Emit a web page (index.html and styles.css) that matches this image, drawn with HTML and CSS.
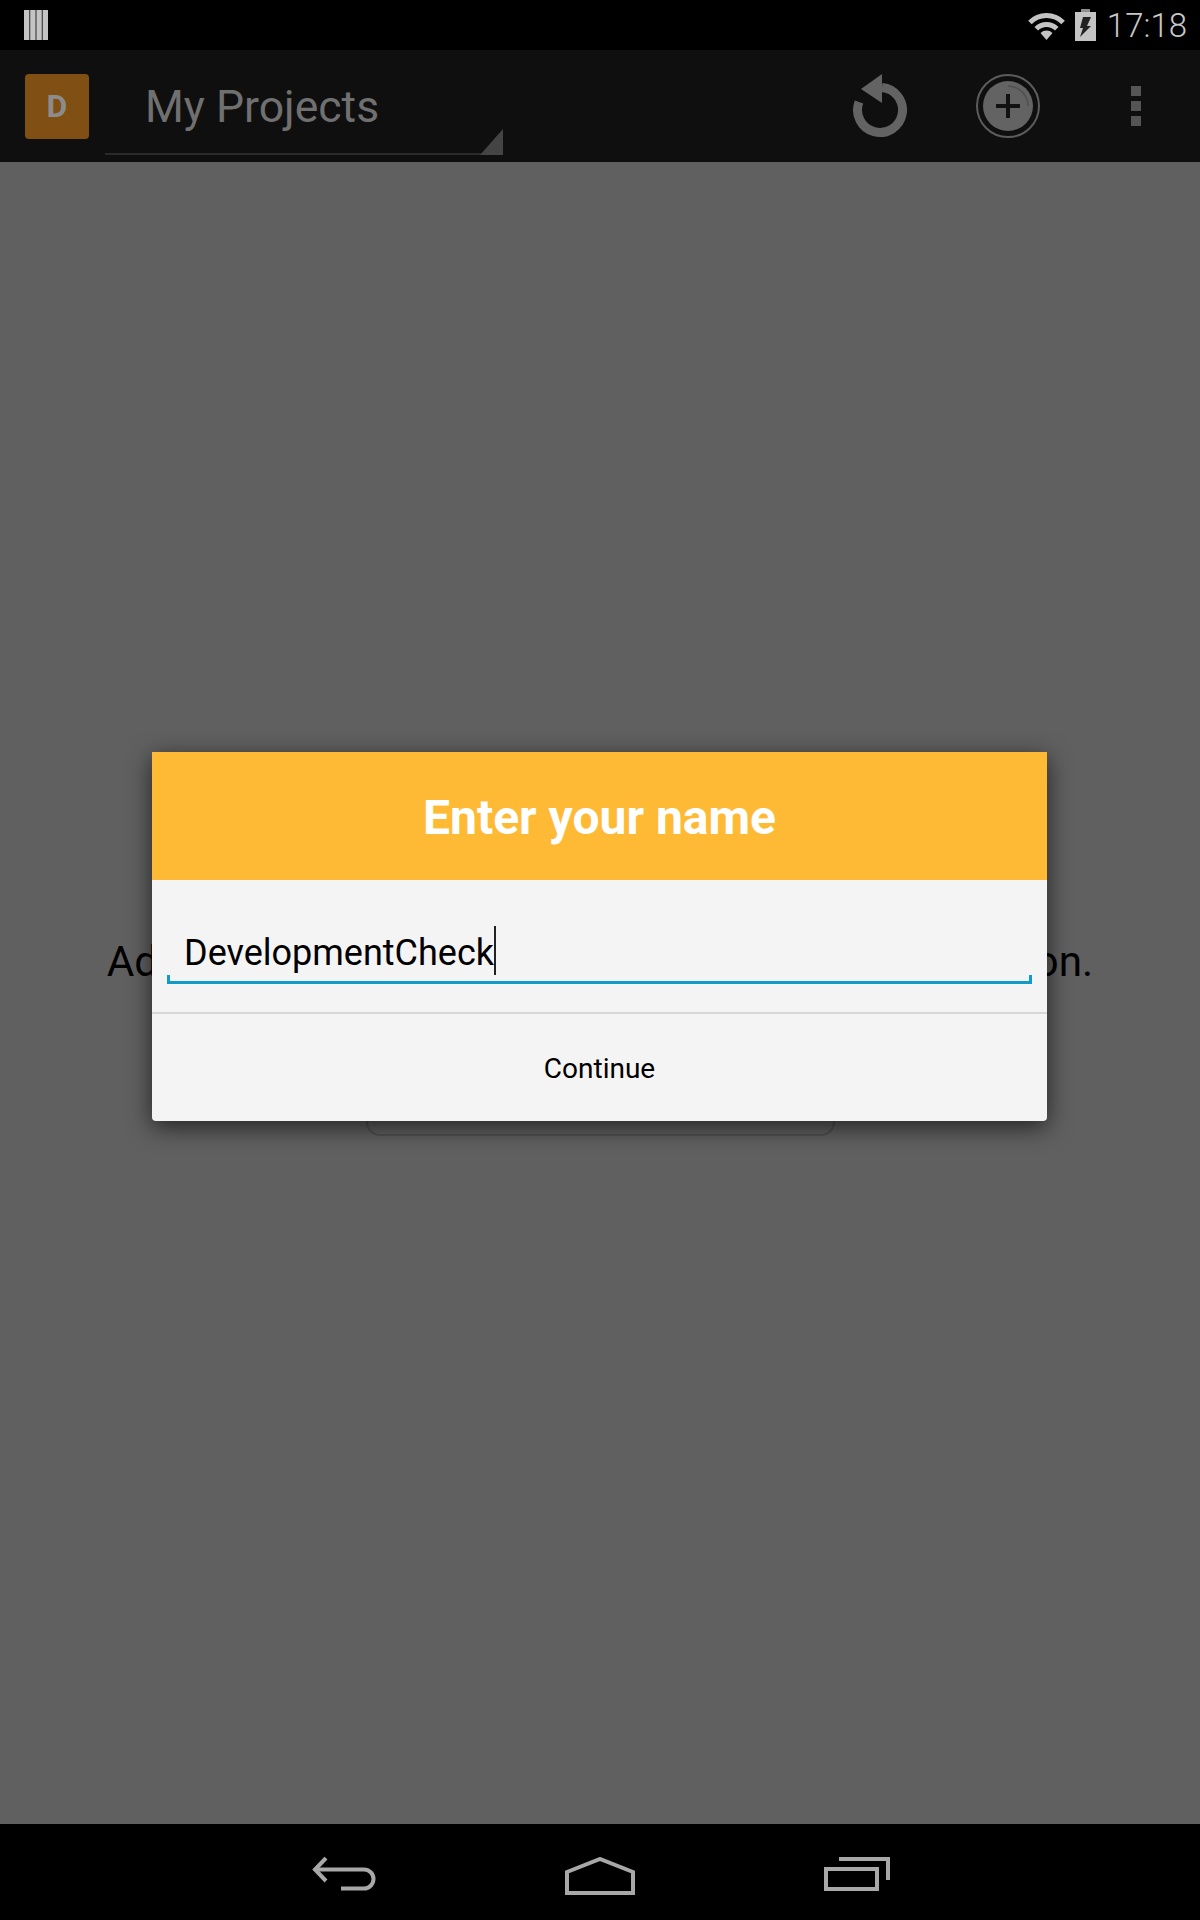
FILE: index.html
```html
<!DOCTYPE html>
<html lang="en">
<head>
    <meta charset="UTF-8">
    <meta name="viewport" content="width=device-width, initial-scale=1.0">
    <title>My Projects</title>
    <link rel="stylesheet" href="styles.css">
</head>
<body>
    <div class="screen">
        <div class="status-bar">
            <svg class="books-icon" width="24" height="30" viewBox="0 0 24 30">
                <rect x="0" width="5.4" height="30" />
                <rect x="6.2" width="5.4" height="30" />
                <rect x="12.4" width="5.4" height="30" />
                <rect x="18.6" width="5.4" height="30" />
            </svg>
            <div class="status-right">
                <svg class="wifi-icon" width="39" height="30" viewBox="0 0 39 30">
                    <path class="wifi-dot" d="M19.5 30 L13.5 23 A8.5 8.5 0 0 1 25.5 23 Z" />
                    <path d="M9.25 18.75 A14.5 14.5 0 0 1 29.75 18.75" />
                    <path d="M2.9 12.4 A23.5 23.5 0 0 1 36.1 12.4" />
                </svg>
                <svg class="battery-icon" width="21" height="32" viewBox="0 0 21 32">
                    <rect class="battery-cap" x="6" y="0" width="9" height="4" />
                    <rect class="battery-body" x="0" y="3" width="21" height="29" />
                    <path class="battery-bolt" d="M8 8 H16 L12 17 H16 L5 28 L8 19 H5 Z" />
                </svg>
                <span class="clock">17:18</span>
            </div>
        </div>

        <div class="action-bar">
            <div class="app-icon">D</div>
            <div class="spinner">My Projects</div>
            <div class="actions">
                <svg class="reload-icon" width="56" height="66" viewBox="0 0 56 66">
                    <path d="M7 29 A22.5 22.5 0 1 0 30 14.6" />
                    <polygon points="9,16 30,1 30,30" />
                </svg>
                <svg class="add-icon" width="64" height="64" viewBox="0 0 64 64">
                    <circle class="add-ring" cx="32" cy="32" r="31" />
                    <circle class="add-disc" cx="32" cy="32" r="25" />
                    <path class="add-glint" d="M32 12 A20 20 0 0 1 52 32" />
                    <path class="add-plus" d="M20 32 H44 M32 20 V44" />
                </svg>
                <div class="overflow-icon">
                    <span></span>
                    <span></span>
                    <span></span>
                </div>
            </div>
        </div>

        <div class="content">
            <p class="empty-message">Add a new project by tapping the plus icon or button.</p>
            <div class="add-button"></div>

            <div class="dialog">
                <div class="dialog-title">Enter your name</div>
                <div class="dialog-body">
                    <div class="name-field">
                        <span class="name-value">DevelopmentCheck</span><span class="caret"></span>
                    </div>
                </div>
                <div class="dialog-action">Continue</div>
            </div>
        </div>

        <div class="nav-bar">
            <svg class="nav-icon" width="64" height="34" viewBox="0 0 64 34">
                <path d="M14 1 L3 12.5 L14 24" />
                <path d="M3 12.5 H52 A9.5 9.5 0 0 1 52 31.5 H29" />
            </svg>
            <svg class="nav-icon" width="70" height="38" viewBox="0 0 70 38">
                <path d="M2 36 V15 L35 2 L68 15 V36 Z" />
            </svg>
            <svg class="nav-icon" width="66" height="34" viewBox="0 0 66 34">
                <rect x="2" y="12" width="51" height="20" />
                <path d="M15 2 H64 V23" />
            </svg>
        </div>
    </div>
</body>
</html>
```

FILE: styles.css
```css
body {
    margin: 0;
    background-color: #000;
    font-family: Roboto, "Liberation Sans", sans-serif;
}
.screen {
    width: 1200px;
    height: 1920px;
    display: flex;
    flex-direction: column;
    overflow: hidden;
}

/* status bar */
.status-bar {
    height: 50px;
    flex: none;
    background-color: #000;
    display: flex;
    align-items: center;
    justify-content: space-between;
    padding: 0 13px 0 24px;
}
.books-icon rect {
    fill: #c4c4c4;
}
.status-right {
    display: flex;
    align-items: center;
}
.wifi-icon {
    margin-right: 9px;
}
.wifi-icon path {
    fill: none;
    stroke: #c4c4c4;
    stroke-width: 5;
}
.wifi-icon .wifi-dot {
    fill: #c4c4c4;
    stroke: none;
}
.battery-icon {
    margin-right: 11px;
}
.battery-cap {
    fill: #8f8f8f;
}
.battery-body {
    fill: #c4c4c4;
}
.battery-bolt {
    fill: #222;
}
.clock {
    font-size: 33px;
    font-weight: 300;
    color: #c8c8c8;
}

/* action bar */
.action-bar {
    height: 112px;
    flex: none;
    box-sizing: border-box;
    background-color: #0f0f0f;
    display: flex;
    align-items: center;
    padding-left: 25px;
}
.app-icon {
    width: 64px;
    height: 65px;
    border-radius: 4px;
    background-color: #7f4f14;
    color: #8c8c8c;
    font-size: 32px;
    font-weight: 700;
    display: flex;
    align-items: center;
    justify-content: center;
}
.spinner {
    position: relative;
    width: 398px;
    height: 78px;
    box-sizing: border-box;
    margin: 19px 0 0 16px;
    padding: 4px 0 0 40px;
    border-bottom: 2px solid #2a2a2a;
    font-size: 44.5px;
    color: #707070;
}
.spinner::after {
    content: "";
    position: absolute;
    right: 0;
    bottom: -2px;
    border-style: solid;
    border-width: 0 0 26px 23px;
    border-color: transparent transparent #444 transparent;
}
.actions {
    margin-left: auto;
    padding-right: 59px;
    display: flex;
    align-items: center;
}
.reload-icon {
    margin-right: 68px;
}
.reload-icon path {
    fill: none;
    stroke: #636363;
    stroke-width: 9;
}
.reload-icon polygon {
    fill: #636363;
}
.add-icon {
    margin-right: 91px;
}
.add-ring {
    fill: none;
    stroke: #5c5c5c;
    stroke-width: 2;
}
.add-disc {
    fill: #636363;
}
.add-glint {
    fill: none;
    stroke: #505050;
    stroke-width: 1.5;
}
.add-plus {
    fill: none;
    stroke: #121212;
    stroke-width: 4;
}
.overflow-icon {
    display: flex;
    flex-direction: column;
    gap: 5px;
}
.overflow-icon span {
    width: 10px;
    height: 10px;
    background-color: #555;
}

/* page behind the dialog */
.content {
    position: relative;
    flex: 1;
    background-color: #606060;
    display: flex;
    flex-direction: column;
    align-items: center;
}
.empty-message {
    margin: 775px 0 0;
    font-size: 42.3px;
    color: #000;
    white-space: nowrap;
}
.add-button {
    width: 469px;
    height: 100px;
    box-sizing: border-box;
    margin-top: 50px;
    border: 2px solid #505050;
    border-radius: 14px;
}

/* dialog */
.dialog {
    position: absolute;
    top: 590px;
    left: 152px;
    width: 895px;
    border-radius: 0 0 4px 4px;
    background-color: #f4f4f4;
    box-shadow: 0 6px 24px rgba(0, 0, 0, 0.65);
}
.dialog-title {
    height: 128px;
    padding-top: 2px;
    box-sizing: border-box;
    background-color: #ffba35;
    color: #fff;
    font-size: 48px;
    font-weight: 700;
    display: flex;
    align-items: center;
    justify-content: center;
}
.dialog-body {
    padding: 40px 15px 28px;
    border-bottom: 2px solid #d8d8d8;
}
.name-field {
    position: relative;
    height: 64px;
    box-sizing: border-box;
    padding-left: 17px;
    border-bottom: 3px solid #129ac8;
    display: flex;
    align-items: flex-start;
}
.name-field::before,
.name-field::after {
    content: "";
    position: absolute;
    bottom: 0;
    width: 3px;
    height: 6px;
    background-color: #129ac8;
}
.name-field::before {
    left: 0;
}
.name-field::after {
    right: 0;
}
.name-value {
    font-size: 36px;
    line-height: 66px;
    color: #000;
}
.caret {
    width: 2px;
    height: 49px;
    margin-top: 6px;
    background-color: #222;
}
.dialog-action {
    height: 107px;
    padding-top: 2px;
    box-sizing: border-box;
    color: #000;
    font-size: 28px;
    display: flex;
    align-items: center;
    justify-content: center;
}

/* navigation bar */
.nav-bar {
    height: 96px;
    flex: none;
    background-color: #000;
    display: flex;
    align-items: flex-start;
    justify-content: center;
    gap: 189px;
    padding: 33px 0 0 2px;
    box-sizing: border-box;
}
.nav-icon path,
.nav-icon rect {
    fill: none;
    stroke: #a8a8a8;
    stroke-width: 4;
}
```
